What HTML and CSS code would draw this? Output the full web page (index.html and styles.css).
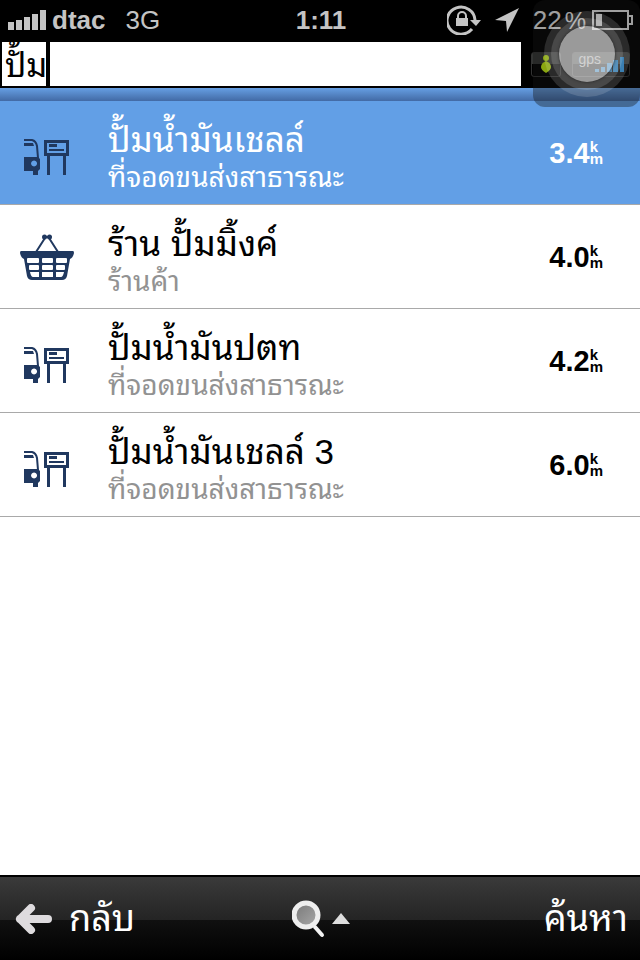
FILE: index.html
```
<!DOCTYPE html>
<html lang="th">
<head>
  <meta charset="UTF-8" />
  <meta name="viewport" content="width=device-width, initial-scale=1.0"/>
  <title>ค้นหา</title>
  <link rel="stylesheet" href="styles.css">
</head>
<body>
  <!-- shared icons -->
  <svg class="sprite" aria-hidden="true">
    <symbol id="icon-bus" viewBox="0 0 46 36">
      <path d="M0 1h8q4 1 5 6l1 12" fill="none" stroke="currentColor" stroke-width="2"/>
      <path d="M0 4h9l1 3H0z" fill="currentColor"/>
      <path fill="currentColor" fill-rule="evenodd" d="M0 18h14l2 2v10l-2 2v4H9v-4H0zM10 21.500a3 3 0 1 0 .1 0z"/>
      <path d="M21.500 2.500h22v13h-22z" fill="none" stroke="currentColor" stroke-width="3"/>
      <path d="M25 5h8v3h-8zM25 10h15v2H25zM23 16h3v20h-3zM39 16h3v20h-3z" fill="currentColor"/>
    </symbol>
    <symbol id="icon-basket" viewBox="0 0 54 46">
      <path d="M16 18 25 4M38 18 29 4M25 3h5" fill="none" stroke="currentColor" stroke-width="2"/>
      <circle cx="24.500" cy="3" r="2.500" fill="currentColor"/>
      <circle cx="29.500" cy="3" r="2.500" fill="currentColor"/>
      <path d="M1 17h52q1 0 1 2-1 5-4 6l-3 17q-1 4-5 4H12q-4 0-5-4L4 25q-3-1-4-6 0-2 1-2z" fill="currentColor"/>
      <g fill="#fff">
        <rect x="7" y="24" width="12" height="5" rx="1"/><rect x="22" y="24" width="11" height="5" rx="1"/><rect x="36" y="24" width="11" height="5" rx="1"/>
        <rect x="9" y="31" width="10" height="5" rx="1"/><rect x="22" y="31" width="11" height="5" rx="1"/><rect x="36" y="31" width="9" height="5" rx="1"/>
        <path d="M10 38h9v5h-6q-2 0-3-5zM22 38h11v5H22zM36 38h8q-1 5-3 5h-5z"/>
      </g>
    </symbol>
  </svg>

  <div class="app">
    <header class="status">
      <div class="status-left">
        <svg class="signal" viewBox="0 0 38 20"><path d="M0 12h6v8H0zM8 10h6v10H8zM16 7h6v13h-6zM24 4h6v16h-6zM32 0h6v20h-6z" fill="#c4c4c4"/></svg>
        <span class="carrier">dtac</span>
        <span>3G</span>
      </div>
      <div class="clock">1:11</div>
      <div class="status-right">
        <svg class="lock" viewBox="0 0 34 30">
          <path d="M25 24A14 13.500 0 1 1 28 15" fill="none" stroke="#c4c4c4" stroke-width="3"/>
          <path d="M23 15h11l-5 6zM9 13h12v8H9z" fill="#c4c4c4"/>
          <path d="M11 14v-3a4 4 0 0 1 8 0v3" fill="none" stroke="#c4c4c4" stroke-width="2"/>
        </svg>
        <svg class="arrow" viewBox="0 0 24 24"><path d="M24 0 12 24l-1-11L0 12z" fill="#c4c4c4"/></svg>
        <span class="percent">22<small>%</small></span>
        <svg class="battery" viewBox="0 0 42 20"><path d="M1 1h35v18H1zM36 6h4v8h-4" fill="none" stroke="#f4f4f4" stroke-width="2"/><path d="M4 4h6v12H4z" fill="#f4f4f4"/></svg>
      </div>
    </header>

    <div class="search">
      <div class="search-field">
        <input type="text" class="search-input" value="ปั้ม" aria-label="ค้นหา" />
        <span class="caret"></span>
      </div>
      <div class="indicators">
        <div class="badge">
          <svg viewBox="0 0 10 18"><circle cx="5" cy="3" r="3" fill="#d2ff0e"/><path d="M5 6q5 2 5 6 0 3-5 6-5-3-5-6 0-4 5-6z" fill="#d2ff0e"/></svg>
        </div>
        <div class="badge gps">
          <span>gps</span>
          <svg viewBox="0 0 29 15"><path d="M0 12h4v3H0zM6 10h4v5H6zM12 6h5v9h-5zM18 3h5v12h-5zM25 0h4v15h-4z" fill="#1fa0ff"/></svg>
        </div>
      </div>
    </div>
    <div class="strip"></div>

    <main class="results">
      <a href="#" class="row selected">
        <svg class="bus"><use href="#icon-bus"/></svg>
        <div class="info"><div class="name">ปั้มน้ำมันเชลล์</div><div class="type">ที่จอดขนส่งสาธารณะ</div></div>
        <div class="distance">3.4<span class="unit"><span>k</span><span>m</span></span></div>
      </a>
      <a href="#" class="row">
        <svg class="basket"><use href="#icon-basket"/></svg>
        <div class="info"><div class="name">ร้าน ปั้มมิ้งค์</div><div class="type">ร้านค้า</div></div>
        <div class="distance">4.0<span class="unit"><span>k</span><span>m</span></span></div>
      </a>
      <a href="#" class="row">
        <svg class="bus"><use href="#icon-bus"/></svg>
        <div class="info"><div class="name">ปั้มน้ำมันปตท</div><div class="type">ที่จอดขนส่งสาธารณะ</div></div>
        <div class="distance">4.2<span class="unit"><span>k</span><span>m</span></span></div>
      </a>
      <a href="#" class="row">
        <svg class="bus"><use href="#icon-bus"/></svg>
        <div class="info"><div class="name">ปั้มน้ำมันเชลล์ 3</div><div class="type">ที่จอดขนส่งสาธารณะ</div></div>
        <div class="distance">6.0<span class="unit"><span>k</span><span>m</span></span></div>
      </a>
    </main>

    <footer class="toolbar">
      <button type="button" class="back">
        <svg viewBox="0 0 38 30"><path d="M16 4 5 15l11 11M5 15h28" fill="none" stroke="#dedbde" stroke-width="8" stroke-linecap="round" stroke-linejoin="round"/></svg>
        กลับ
      </button>
      <button type="button" class="options" aria-label="ตัวเลือก">
        <svg viewBox="0 0 60 38">
          <defs>
            <linearGradient id="lens" x1="0" y1="0" x2="1" y2="1"><stop offset="0" stop-color="#777"/><stop offset="1" stop-color="#aaa"/></linearGradient>
          </defs>
          <path d="m23 27 7 8" stroke="#f2f2f2" stroke-width="4" stroke-linecap="round"/>
          <circle cx="14" cy="15" r="12" fill="url(#lens)" stroke="#eee" stroke-width="5"/>
          <path d="m40 24 9-11 9 11z" fill="#ddd"/>
        </svg>
      </button>
      <button type="button" class="find">ค้นหา</button>
    </footer>

    <div class="assist"><div class="ring"><div class="ring-mid"><div class="knob"></div></div></div></div>
  </div>
</body>
</html>
```
FILE: styles.css
```
* {
  box-sizing: border-box;
}
body {
  margin: 0;
  background: #fff;
  color: #000;
  font-family: "Liberation Sans", "Noto Sans Thai Looped", "Loma", "Waree", "Noto Sans Thai", sans-serif;
}
svg {
  display: block;
  flex: none;
}
button {
  background: none;
  border: none;
  padding: 0;
  color: #fff;
  font-family: inherit;
  font-size: 36px;
  line-height: 48px;
  cursor: pointer;
}
.sprite {
  position: absolute;
  width: 0;
  height: 0;
}
.app {
  position: relative;
  min-height: 100vh;
  display: flex;
  flex-direction: column;
}

/* status bar */
.status {
  display: grid;
  grid-template-columns: 1fr auto 1fr;
  align-items: center;
  height: 42px;
  padding: 0 6px 2px 8px;
  background: #000;
  color: #c4c4c4;
  font-size: 26px;
  font-weight: bold;
}
.status-left,
.status-right {
  display: flex;
  align-items: center;
}
.status-left {
  gap: 6px;
}
.status-right {
  justify-content: flex-end;
}
.status-left span:last-child {
  margin-left: 14px;
  font-weight: normal;
}
.signal {
  width: 38px;
  height: 20px;
}
.lock {
  width: 34px;
  height: 30px;
  margin-right: 14px;
}
.arrow {
  width: 24px;
  height: 24px;
  margin-right: 14px;
}
.percent {
  color: #f4f4f4;
  font-weight: normal;
}
.percent small {
  margin-left: 3px;
  font-size: 24px;
}
.battery {
  width: 42px;
  height: 20px;
  margin-left: 6px;
}

/* search */
.search {
  display: flex;
  height: 46px;
  padding: 0 10px 2px 2px;
  background: #000;
}
.search-field {
  position: relative;
  flex: 1;
}
.search-input {
  display: block;
  width: 100%;
  height: 44px;
  padding: 0 3px 4px;
  border: none;
  border-radius: 0;
  outline: none;
  background: #fff;
  font-family: inherit;
  font-size: 33px;
}
.caret {
  position: absolute;
  top: 0;
  left: 44px;
  width: 4px;
  height: 44px;
  background: #000;
}
.indicators {
  display: flex;
  align-items: center;
  gap: 11px;
  padding-left: 10px;
}
.badge {
  display: flex;
  align-items: center;
  justify-content: center;
  width: 30px;
  height: 25px;
  border: 1px solid #333;
  border-radius: 3px;
  background: linear-gradient(#343634 50%, #000 50%);
}
.badge svg {
  width: 10px;
  height: 18px;
}
.badge.gps {
  justify-content: flex-end;
  width: 58px;
  padding-right: 5px;
  color: #ddd;
  font-size: 14px;
}
.badge.gps span {
  margin: -10px -6px 0 0;
}
.badge.gps svg {
  width: 29px;
  height: 15px;
}
.strip {
  height: 13px;
  background: linear-gradient(#669fe3, #426aa5);
}

/* results */
.results {
  flex: 1;
}
.row {
  display: grid;
  grid-template-columns: 94px 1fr auto;
  align-items: center;
  height: 104px;
  padding-right: 37px;
  border-bottom: 1px solid #a9a9a9;
  color: #000;
  text-decoration: none;
}
.row svg {
  justify-self: center;
  color: #20385f;
}
.bus {
  width: 46px;
  height: 36px;
  margin-top: 8px;
}
.basket {
  width: 54px;
  height: 46px;
}
.info {
  padding: 6px 0 0 14px;
  white-space: nowrap;
}
.name {
  font-size: 35px;
  line-height: 44px;
}
.type {
  color: #929292;
  font-size: 28px;
  line-height: 32px;
}
.distance {
  display: flex;
  align-items: center;
  padding-top: 2px;
  font-size: 29px;
  font-weight: bold;
}
.unit {
  display: flex;
  flex-direction: column;
  padding-bottom: 2px;
  font-size: 15px;
  line-height: 12px;
}
.row.selected {
  background: #629fe6;
}
.row.selected,
.row.selected .type {
  color: #fff;
}

/* bottom toolbar */
.toolbar {
  display: grid;
  grid-template-columns: 1fr auto 1fr;
  align-items: center;
  height: 85px;
  padding: 0 12px 0 15px;
  border-top: 2px solid #000;
  background: linear-gradient(#3a3a3a, #242424 52%, #101010 52%, #000);
}
.back {
  display: flex;
  align-items: center;
  gap: 16px;
}
.back svg {
  width: 38px;
  height: 30px;
}
.options svg {
  width: 60px;
  height: 38px;
}
.find {
  justify-self: end;
}

/* floating touch button */
.assist {
  position: absolute;
  top: 0;
  right: 0;
  display: grid;
  place-items: center;
  width: 107px;
  height: 107px;
  border-radius: 12px;
  background: rgba(20, 20, 20, 0.38);
}
.ring,
.ring-mid,
.knob {
  display: grid;
  place-items: center;
  border-radius: 50%;
}
.ring {
  width: 86px;
  height: 86px;
  background: rgba(255, 255, 255, 0.14);
}
.ring-mid {
  width: 72px;
  height: 72px;
  background: rgba(255, 255, 255, 0.14);
}
.knob {
  width: 56px;
  height: 56px;
  background: rgba(255, 255, 255, 0.45);
  box-shadow: 0 0 3px #222;
}
```
